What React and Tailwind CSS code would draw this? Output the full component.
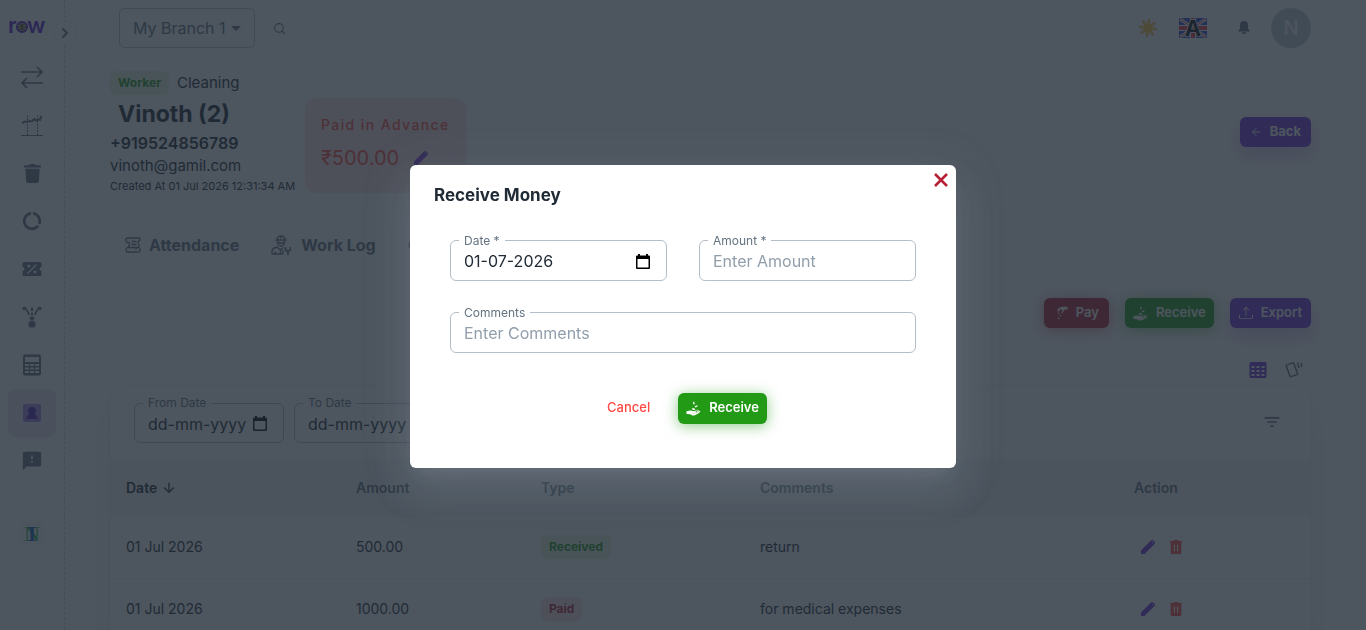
import React, { useState } from 'react'
import { BsUpload } from 'react-icons/bs'
import { FaTrash } from 'react-icons/fa'
import { GiPayMoney, GiReceiveMoney } from 'react-icons/gi'
import { MdArrowDownward, MdDataUsage, MdFeedback, MdFilterList } from 'react-icons/md'
import { ArrowLeft, ChevronRight, Search, Clock } from 'lucide-react'

const payments = [
    { id: 1, date: '01 Jul 2026', amount: '500.00', type: 'Received', comments: 'return' },
    { id: 2, date: '01 Jul 2026', amount: '1000.00', type: 'Paid', comments: 'for medical expenses' },
]

const LogoRow = () => (
    <svg className="overflow-visible" width="36" height="24" viewBox="0 0 36 24" role="img" aria-label="row">
        <text x="-1" y="18" fontSize="22" fontWeight="600" fill="#5b21d6">r</text>
        <circle cx="13" cy="12" r="5" fill="#c9b26b" stroke="#5b21d6" strokeWidth="2" />
        <path d="M13 7v10M8 12h10M10 9q3 3 6 0M10 15q3-3 6 0" stroke="#212b36" strokeWidth="0.8" fill="none" />
        <text x="18" y="18" fontSize="22" fontWeight="600" fill="#5b21d6">w</text>
    </svg>
)

const TransferIcon = () => (
    <svg width="24" height="24" viewBox="0 0 24 24" fill="none" stroke="currentColor" strokeWidth="1.7">
        <path d="M1 7h21M17 2l5 5-5 5M23 18H2M7 13l-5 5 5 5" />
    </svg>
)

const ChartIcon = () => (
    <svg width="22" height="22" viewBox="0 0 22 22" fill="none" stroke="currentColor">
        <path d="M1 9l3-1.500 2 .5 2-1 3 .5 2-2.500 2 1.500 2-1 2 .5 1-3 1-.5" strokeWidth="2" />
        <path d="M6.500 1v20M16.500 1v20" strokeWidth="1" strokeDasharray="2 1" />
        <path d="M0 21.500h22" strokeWidth="1" />
    </svg>
)

const CouponIcon = () => (
    <svg width="20" height="16" viewBox="0 0 20 16">
        <path fill="currentColor" fillRule="evenodd" d="M2 1h16a1.500 1.500 0 0 1 1.500 1.500V6a2 2 0 0 0 0 4v3.500A1.500 1.500 0 0 1 18 15H2a1.500 1.500 0 0 1-1.500-1.500V10a2 2 0 0 0 0-4V2.500A1.500 1.500 0 0 1 2 1z" />
        <path d="M5.500 12.500l9-9" stroke="#fff" strokeWidth="1.500" />
        <circle cx="7" cy="5" r="1.600" fill="#fff" />
        <circle cx="13" cy="11" r="1.600" fill="#fff" />
    </svg>
)

const SpreadIcon = () => (
    <svg width="22" height="22" viewBox="0 0 22 22" fill="none" stroke="currentColor">
        <path d="M2.500 2Q7 4 8 9M19.500 2Q15 4 14 9M11 2v3M11 6.500V10" strokeWidth="1.600" />
        <path d="M1 1h5L2.500 4.500zM21 1h-5l3.500 3.500zM11 .5L9.500 4h3z" fill="currentColor" stroke="none" />
        <path d="M8 11h6l-2 3.500h-2zM9 15h4l1.500 2v3L13 21.500H9L7.500 20v-3z" fill="currentColor" stroke="none" />
    </svg>
)

const CalculatorIcon = () => (
    <svg width="20" height="22" viewBox="0 0 20 22">
        <rect x="1" y="0.500" width="18" height="21" rx="2" fill="currentColor" />
        <path fill="#fff" d="M3 3h14v5H3zM3 10h4v2H3zM8 10h4v2H8zM13 10h4v2h-4zM3 13.500h4v2H3zM8 13.500h4v2H8zM13 13.500h4v2h-4zM3 17h4v2H3zM8 17h4v2H8zM13 17h4v2h-4z" />
    </svg>
)

const WorkerIcon = () => (
    <svg width="18" height="18" viewBox="0 0 18 18">
        <rect width="18" height="18" rx="2" fill="#7635dc" fillOpacity="0.6" />
        <circle cx="9" cy="7" r="4" fill="#5119b7" />
        <path d="M3.500 15q.5-4 4-5h3q3.500 1 4 5z" fill="#5119b7" />
    </svg>
)

const InLogo = () => (
    <svg width="24" height="24" viewBox="0 0 24 24" role="img" aria-label="NI" fontFamily="Liberation Serif, serif">
        <rect width="24" height="24" fill="#f8fafb" />
        <text x="12" y="19" fontSize="22" textAnchor="middle" fill="#22b14c">N</text>
        <text x="12" y="19" fontSize="22" fontWeight="700" textAnchor="middle" fill="#1f5fbf">I</text>
    </svg>
)

const SunIcon = () => (
    <svg width="20" height="20" viewBox="0 0 20 20">
        <path fill="#f7a823" d="M11.500 0l.8 4.500-3-.6zM18 4l-2.500 3.800-1.900-2.300zM20 11.500l-4.500.9.4-3zM15.800 18.300l-3.600-2.800 2.400-1.700zM8.300 20l-.7-4.500 3 .5zM1.800 15.800l2.700-3.600 1.800 2.400zM0 8.400l4.500-.8-.6 3zM4.200 1.700L7.900 4.400 5.500 6.200z" />
        <circle cx="10" cy="10" r="5.200" fill="#ffc83d" />
    </svg>
)

const FlagIcon = () => (
    <svg className="overflow-visible" width="28" height="20" viewBox="0 0 28 20" role="img" aria-label="English">
        <rect width="28" height="20" rx="1" fill="#2a46d8" />
        <path d="M1 1l26 18M27 1L1 19" stroke="#fff" strokeWidth="3" />
        <path d="M1 1l26 18M27 1L1 19" stroke="#e8304c" strokeWidth="1" />
        <path d="M14 0v20M0 10h28" stroke="#fff" strokeWidth="6" />
        <path d="M14 0v20M0 10h28" stroke="#e8304c" strokeWidth="4" />
        <text x="14" y="18" fontSize="22" fontWeight="700" textAnchor="middle" fill="#111" stroke="#fff" strokeWidth="1.500" paintOrder="stroke">A</text>
    </svg>
)

const BellIcon = () => (
    <svg width="12" height="14" viewBox="0 0 12 14" fill="currentColor">
        <path d="M6 0a4 4 0 0 0-4 4v3.500L.5 9.500v1h11v-1L10 7.500V4a4 4 0 0 0-4-4z" />
        <path d="M3.500 11.200a2.600 2.600 0 0 0 5 0z" />
    </svg>
)

const ScrollIcon = () => (
    <svg width="16" height="16" viewBox="0 0 16 16" fill="none" stroke="currentColor" strokeWidth="1.300">
        <path d="M3 5.500A2.200 2.200 0 0 1 3 1h10.500q1.500 0 1.500 1.500T13.500 4q-1 1.500 0 3t0 3.500" />
        <path d="M3 5.500h1q1 1.500 0 3T3.500 11M2.500 15h9.500a2.200 2.200 0 0 0 1.500-4.500H2.500Q1 11 1 13t1.500 2M3 5.500h1M6.500 4.500h5M6.500 7.500h5M11 10.500v2" />
    </svg>
)

const LabourIcon = () => (
    <svg width="20" height="20" viewBox="0 0 20 20" fill="none" stroke="currentColor" strokeWidth="1.300">
        <path d="M4.500 5h11M6 5q0-3.500 4-4 4 .5 4 4M10 1v2.500M6.500 5v2.500q.5 3.500 3.500 3.500t3.500-3.500V5M7 8h6" />
        <path d="M1 19v-3.500q1-2.500 5-3.500l3.500 3 2.500-2.500M1 19h11M4 19v-2.500M9.500 15v4M12 15v4" />
        <path d="M14.500 12v2.500q0 1.500 2.500 1.500t2.500-1.500V12M17 16v4" strokeWidth="1.800" />
    </svg>
)

const GridIcon = () => (
    <svg width="18" height="18" viewBox="0 0 18 18">
        <path fill="currentColor" fillRule="evenodd" d="M2 1h14a1.500 1.500 0 0 1 1.500 1.500v13A1.500 1.500 0 0 1 16 17H2A1.500 1.500 0 0 1 .5 15.500v-13A1.500 1.500 0 0 1 2 1zM2.500 5v2h3V5zM7.500 5v2h3V5zM12.500 5v2h3V5zM2.500 9v2h3V9zM7.500 9v2h3V9zM12.500 9v2h3V9zM2.500 13v2h3v-2zM7.500 13v2h3v-2zM12.500 13v2h3v-2z" />
    </svg>
)

const CardsIcon = () => (
    <svg width="18" height="18" viewBox="0 0 18 18" fill="none" stroke="currentColor" strokeWidth="1.500">
        <rect x="3" y="2.500" width="8" height="12.500" rx="1" transform="rotate(-20 7 9)" />
        <path d="M12.500 1.500l1.500 5.500M16.500 2v4" />
    </svg>
)

const PencilIcon = () => (
    <svg width="16" height="16" viewBox="0 0 16 16" fill="#7635dc">
        <path fillRule="evenodd" d="M1 15v-3.500L11 1.500a1.500 1.500 0 0 1 2.200 0l1.300 1.300a1.500 1.500 0 0 1 0 2.200L4.500 15zM11.900 3.200l.9.9.6-.6-.9-.9z" />
    </svg>
)

const BinIcon = () => (
    <svg width="12" height="14" viewBox="0 0 12 14">
        <path fill="#ff4842" fillRule="evenodd" d="M4 0h4l.5 1H12v1.500h-.7V12.500A1.500 1.500 0 0 1 9.800 14H2.200A1.500 1.500 0 0 1 .7 12.500V2.500H0V1h3.500zM3.800 4.500v6.500h1.200V4.500zM7 4.500v6.500h1.200V4.500z" />
    </svg>
)

const CalendarIcon = () => (
    <svg width="14" height="15" viewBox="0 0 14 15">
        <path fill="#000" fillRule="evenodd" d="M2 0h2v1.500h6V0h2v1.500h1a1 1 0 0 1 1 1V14a1 1 0 0 1-1 1H1a1 1 0 0 1-1-1V2.500a1 1 0 0 1 1-1h1zM1.500 5v8.500h11V5z" />
    </svg>
)

const menus = [
    { name: 'Transactions', icon: <TransferIcon /> },
    { name: 'Reports', icon: <ChartIcon /> },
    { name: 'Trash', icon: <FaTrash size={19} /> },
    { name: 'Usage', icon: <MdDataUsage size={22} /> },
    { name: 'Coupons', icon: <CouponIcon /> },
    { name: 'Distribution', icon: <SpreadIcon /> },
    { name: 'Calculator', icon: <CalculatorIcon /> },
    { name: 'Workers', icon: <WorkerIcon />, active: true },
    { name: 'Feedback', icon: <MdFeedback size={22} /> },
]

const Field = ({ id, label, date, ...rest }) => (
    <fieldset className="min-w-0 rounded-md border border-[#b4bec8] pr-[14px] pl-2">
        <legend className="px-[5px] text-xs leading-3 text-[#637381]">
            <label htmlFor={id}>{label}</label>
        </legend>
        <div className="flex h-[33px] items-center pb-1 pl-[5px]">
            <input
                id={id}
                type="text"
                className={`w-full min-w-0 bg-transparent text-base leading-5 text-[#212b36] outline-none ${date ? 'placeholder:text-[#212b36]' : 'placeholder:text-[#919eab]'}`}
                {...rest}
            />
            {date && (
                <button type="button" aria-label="Open calendar" className="mr-[2px] shrink-0">
                    <CalendarIcon />
                </button>
            )}
        </div>
    </fieldset>
)

const Sidebar = () => (
    <aside className="relative w-[65px] shrink-0 border-r border-dashed border-[#919eab]/40">
        <div className="flex h-[53px] items-center pl-[9px]">
            <LogoRow />
        </div>
        <button
            aria-label="Expand menu"
            className="absolute top-[21px] -right-[13px] flex h-6 w-6 items-center justify-center rounded-full border border-dashed border-[#919eab]/25 bg-white text-[#637381]"
        >
            <ChevronRight size={16} strokeWidth={3} />
        </button>
        <nav className="flex flex-col px-2">
            {menus.map((item) => (
                <a
                    key={item.name}
                    href="#"
                    aria-label={item.name}
                    className={`flex h-12 w-12 items-center justify-center rounded-lg text-[#637381] ${item.active ? 'bg-[#7635dc]/10' : ''}`}
                >
                    {item.icon}
                </a>
            ))}
        </nav>
        <div className="mt-[37px] flex justify-center">
            <InLogo />
        </div>
    </aside>
)

const Header = () => (
    <header className="flex h-14 items-center justify-between pl-[9px]">
        <div className="flex items-center gap-[18px]">
            <div className="relative">
                <select
                    aria-label="Branch"
                    className="h-10 w-[136px] appearance-none rounded-md border border-[#919eab]/60 bg-transparent pl-[13px] text-base text-[#637381]"
                >
                    <option>My Branch 1</option>
                </select>
                <svg className="pointer-events-none absolute top-[18px] right-[14px]" width="10" height="5" viewBox="0 0 10 5">
                    <path d="M0 0h10L5 5z" fill="#637381" />
                </svg>
            </div>
            <button aria-label="Search" className="text-[#637381]">
                <Search size={13} />
            </button>
        </div>
        <div className="flex items-center">
            <button aria-label="Theme" className="mr-[21px]"><SunIcon /></button>
            <button aria-label="Language" className="mr-[31px]"><FlagIcon /></button>
            <button aria-label="Notifications" className="mr-[21px] text-[#637381]"><BellIcon /></button>
            <button className="h-10 w-10 rounded-full bg-[#c4cdd5] text-xl font-medium text-white">N</button>
        </div>
    </header>
)

const WorkerInfo = () => (
    <section className="flex items-start pt-[15px]">
        <div className="flex w-[195px] flex-col whitespace-nowrap text-[#212b36]">
            <div className="flex h-6 items-center gap-2">
                <span className="flex h-6 items-center rounded-md bg-[#54d62c]/15 px-2 text-xs font-bold text-[#229a16]">Worker</span>
                <span className="text-[15px]">Cleaning</span>
            </div>
            <h1 className="pl-2 text-[23px] leading-[38px] font-bold">Vinoth (2)</h1>
            <p className="text-base leading-5 font-semibold">+919524856789</p>
            <p className="text-[15px] leading-[26px]">vinoth@gamil.com</p>
            <p className="text-[11px] leading-[14px]">Created At 01 Jul 2026 12:31:34 AM</p>
        </div>
        <div className="mt-[27px] h-[95px] rounded-xl bg-[#ff4842]/15 px-4 pt-4 text-[#ff4842]">
            <p className="text-sm leading-[22px] font-medium tracking-widest whitespace-nowrap">Paid in Advance</p>
            <div className="flex items-center gap-[14px] pt-2">
                <span className="text-xl">₹500.00</span>
                <button aria-label="Edit advance"><PencilIcon /></button>
            </div>
        </div>
        <button className="mt-[46px] ml-auto flex h-[30px] items-center gap-2 rounded-md bg-[#7635dc] px-[10px] text-[13px] font-bold text-white shadow-[0_8px_16px_0_rgba(118,53,220,0.24)]">
            <ArrowLeft size={12} strokeWidth={2} />
            Back
        </button>
    </section>
)

const Tabs = () => (
    <div className="mt-[34px] flex h-9 items-center gap-8 pl-[15px] text-base font-bold text-[#637381]">
        <button className="flex items-center gap-2"><ScrollIcon />Attendance</button>
        <button className="flex items-center gap-[10px]"><LabourIcon />Work Log</button>
        <button aria-label="Payments"><Clock size={16} /></button>
    </div>
)

const PaymentTable = () => (
    <div className="mt-[7px] rounded-t-2xl bg-white shadow-[0_0_2px_0_rgba(145,158,171,0.24),0_16px_32px_-4px_rgba(145,158,171,0.24)]">
        <div className="flex items-center justify-between px-6 pt-[11px] pb-4">
            <div className="flex gap-[10px]">
                <div className="w-[150px]"><Field id="from" label="From Date" placeholder="dd-mm-yyyy" date /></div>
                <div className="w-[150px]"><Field id="to" label="To Date" placeholder="dd-mm-yyyy" date /></div>
            </div>
            <button aria-label="Filter" className="mt-1 mr-[5px] text-[#637381]"><MdFilterList size={20} /></button>
        </div>
        <table className="w-full table-fixed text-left text-sm text-[#212b36]">
            <thead className="bg-[#f4f6f8]">
                <tr className="h-[58px] text-[#637381]">
                    <th className="w-[230px] px-4 font-semibold text-[#212b36]">
                        <span className="flex items-center gap-1">Date <MdArrowDownward size={16} /></span>
                    </th>
                    <th className="w-[185px] px-4 font-semibold">Amount</th>
                    <th className="w-[219px] px-4 font-semibold">Type</th>
                    <th className="px-4 font-semibold">Comments</th>
                    <th className="w-[193px] px-4 font-semibold">Action</th>
                </tr>
            </thead>
            <tbody>
                {payments.map((item) => (
                    <tr key={item.id} className="h-[61px] border-b border-[#f1f3f4]">
                        <td className="px-4">{item.date}</td>
                        <td className="px-4">{item.amount}</td>
                        <td className="px-4">
                            <span className={`inline-flex h-6 items-center rounded-md px-2 text-xs font-bold ${item.type === 'Received' ? 'bg-[#54d62c]/15 text-[#229a16]' : 'bg-[#ff4842]/15 text-[#b72136]'}`}>
                                {item.type}
                            </span>
                        </td>
                        <td className="px-4">{item.comments}</td>
                        <td className="px-4">
                            <div className="flex items-center gap-[14px] pl-[6px]">
                                <button aria-label="Edit"><PencilIcon /></button>
                                <button aria-label="Delete"><BinIcon /></button>
                            </div>
                        </td>
                    </tr>
                ))}
            </tbody>
        </table>
    </div>
)

const ReceiveDialog = ({ onClose }) => {
    const [date, setDate] = useState('01-07-2026')

    return (
        <div className="fixed inset-0 flex items-center justify-center bg-[#212b36]/80 pt-0.5">
            <div
                role="dialog"
                aria-labelledby="dialog-title"
                className="relative w-full max-w-[546px] rounded-md bg-white px-6 pt-[18px] pb-11 shadow-[0_11px_15px_-7px_rgba(145,158,171,0.2),0_24px_38px_3px_rgba(145,158,171,0.14),0_9px_46px_8px_rgba(145,158,171,0.12)]"
            >
                <button aria-label="Close" onClick={onClose} className="absolute top-2 right-2">
                    <svg width="14" height="14" viewBox="0 0 14 14" stroke="#b72136" strokeWidth="2.600">
                        <path d="M1 1l12 12M13 1L1 13" />
                    </svg>
                </button>
                <h2 id="dialog-title" className="text-[17px] leading-6 font-bold text-[#212b36]">Receive Money</h2>
                <form className="px-4 pt-7" onSubmit={(e) => e.preventDefault()}>
                    <div className="grid grid-cols-2 gap-x-8 gap-y-[26px]">
                        <Field id="date" label="Date *" value={date} onChange={(e) => setDate(e.target.value)} date />
                        <Field id="amount" label="Amount *" placeholder="Enter Amount" />
                        <div className="col-span-2">
                            <Field id="comments" label="Comments" placeholder="Enter Comments" />
                        </div>
                    </div>
                    <div className="flex items-center justify-center gap-5 pt-10 text-[13px]">
                        <button type="button" onClick={onClose} className="px-2 font-medium text-[#ff4842]">Cancel</button>
                        <button type="submit" className="flex h-[31px] items-center gap-2 rounded-md bg-[#229a16] px-2 font-semibold text-white shadow-[0_2px_14px_0_rgba(34,154,22,0.5)]">
                            <GiReceiveMoney size={15} />
                            Receive
                        </button>
                    </div>
                </form>
            </div>
        </div>
    )
}

const App = () => {
    const [open, setOpen] = useState(true)

    return (
        <div className="flex h-screen overflow-hidden bg-white font-['Inter',sans-serif]">
            <Sidebar />
            <main className="min-w-0 flex-1 pr-[55px] pl-[45px]">
                <Header />
                <WorkerInfo />
                <Tabs />
                <div className="mt-[35px] flex justify-end gap-4 text-[13px] font-semibold text-white">
                    <button className="flex h-[30px] items-center gap-2 rounded-md bg-[#b72136] px-[10px] shadow-[0_2px_14px_0_rgba(183,33,54,0.5)]">
                        <GiPayMoney size={14} />Pay
                    </button>
                    <button onClick={() => setOpen(true)} className="flex h-[30px] items-center gap-2 rounded-md bg-[#229a16] px-2 shadow-[0_2px_14px_0_rgba(34,154,22,0.5)]">
                        <GiReceiveMoney size={15} />Receive
                    </button>
                    <button className="flex h-[30px] items-center gap-2 rounded-md bg-[#7635dc] px-[9px] shadow-[0_8px_16px_0_rgba(118,53,220,0.24)]">
                        <BsUpload size={14} />Export
                    </button>
                </div>
                <div className="mt-[33px] flex items-center justify-end gap-[18px] pr-2">
                    <button aria-label="Table view" className="text-[#7635dc]"><GridIcon /></button>
                    <button aria-label="Card view" className="text-[#637381]"><CardsIcon /></button>
                </div>
                <PaymentTable />
            </main>
            {open && <ReceiveDialog onClose={() => setOpen(false)} />}
        </div>
    )
}

export default App
